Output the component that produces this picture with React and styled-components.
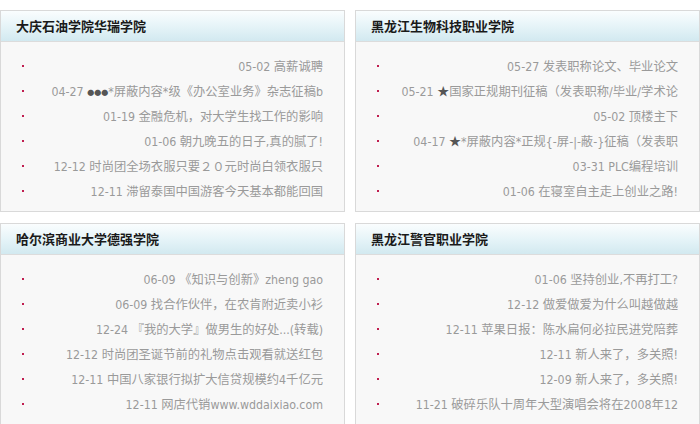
import styled, { createGlobalStyle } from 'styled-components';

const GlobalStyle = createGlobalStyle`
	body {
		margin: 0;
		background: #fff;
		font-family: "DejaVu Sans Condensed", "DejaVu Sans", "Noto Sans CJK SC", sans-serif;
	}
	ul {
		margin: 0;
		padding: 0;
		list-style: none;
	}
`;

const Board = styled.div`
	display: grid;
	grid-template-columns: 345px 345px;
	column-gap: 10px;
	row-gap: 11px;
	padding-top: 10px;
	width: 700px;
`;

const Panel = styled.section`
	border: 1px solid #d9d9d9;
	background: #f8f8f8;
`;

const PanelHead = styled.h3`
	margin: 0;
	height: 30px;
	line-height: 30px;
	padding-left: 15px;
	border-bottom: 1px solid #dcdcdc;
	background: linear-gradient(to bottom, #fafdfe 0%, #e6f4f8 50%, #d2e9f0 100%);
	font-family: "Noto Sans CJK SC", sans-serif;
	font-size: 13px;
	font-weight: 700;
	color: #1a1a1a;
`;

const NewsList = styled.ul`
	padding: 11px 0 8px 0 !important;
`;

const NewsItem = styled.li`
	display: flex;
	align-items: center;
	height: 25px;
	padding: 0 21px 0 21px;
`;

const Dot = styled.span`
	flex: none;
	width: 2px;
	height: 2px;
	margin-right: 22px;
	background: #c01e50;
`;

const Title = styled.a`
	flex: 1;
	min-width: 0;
	overflow: hidden;
	white-space: nowrap;
	text-align: right;
	font-size: 12.3px;
	color: #9a9a9a;
	text-decoration: none;
	cursor: pointer;
`;

/* decorative symbols inside titles (stars, dots) */
const Mark = styled.span`
	font-family: "Noto Sans CJK SC", sans-serif;
	font-size: ${(p) => p.$size || 12}px;
	color: #555;
	vertical-align: ${(p) => (p.$size && p.$size < 10 ? '1px' : 'baseline')};
`;

const boards = [
	{
		name: '大庆石油学院华瑞学院',
		items: [
			'05-02 高薪诚聘',
			<>04-27 <Mark $size={7}>●●●</Mark>*屏蔽内容*级《办公室业务》杂志征稿b</>,
			'01-19 金融危机，对大学生找工作的影响',
			'01-06 朝九晚五的日子,真的腻了!',
			'12-12 时尚团全场衣服只要２０元时尚白领衣服只',
			'12-11 滞留泰国中国游客今天基本都能回国',
		],
	},
	{
		name: '黑龙江生物科技职业学院',
		items: [
			'05-27 发表职称论文、毕业论文',
			<>05-21 <Mark>★</Mark>国家正规期刊征稿（发表职称/毕业/学术论</>,
			'05-02 顶楼主下',
			<>04-17 <Mark>★</Mark>*屏蔽内容*正规{'{-屏-|-蔽-}'}征稿（发表职</>,
			'03-31 PLC编程培训',
			'01-06 在寝室自主走上创业之路!',
		],
	},
	{
		name: '哈尔滨商业大学德强学院',
		items: [
			'06-09 《知识与创新》zheng gao',
			'06-09 找合作伙伴，在农肯附近卖小衫',
			'12-24 『我的大学』做男生的好处...(转载)',
			'12-12 时尚团圣诞节前的礼物点击观看就送红包',
			'12-11 中国八家银行拟扩大信贷规模约4千亿元',
			'12-11 网店代销www.wddaixiao.com',
		],
	},
	{
		name: '黑龙江警官职业学院',
		items: [
			'01-06 坚持创业,不再打工?',
			'12-12 做爱做爱为什么叫越做越',
			'12-11 苹果日报：陈水扁何必拉民进党陪葬',
			'12-11 新人来了，多关照!',
			'12-09 新人来了，多关照!',
			'11-21 破碎乐队十周年大型演唱会将在2008年12',
		],
	},
];

export default function App() {
	return (
		<>
			<GlobalStyle />
			<Board>
				{boards.map((b) => (
					<Panel key={b.name}>
						<PanelHead>{b.name}</PanelHead>
						<NewsList>
							{b.items.map((t, i) => (
								<NewsItem key={i}>
									<Dot />
									<Title>{t}</Title>
								</NewsItem>
							))}
						</NewsList>
					</Panel>
				))}
			</Board>
		</>
	);
}
